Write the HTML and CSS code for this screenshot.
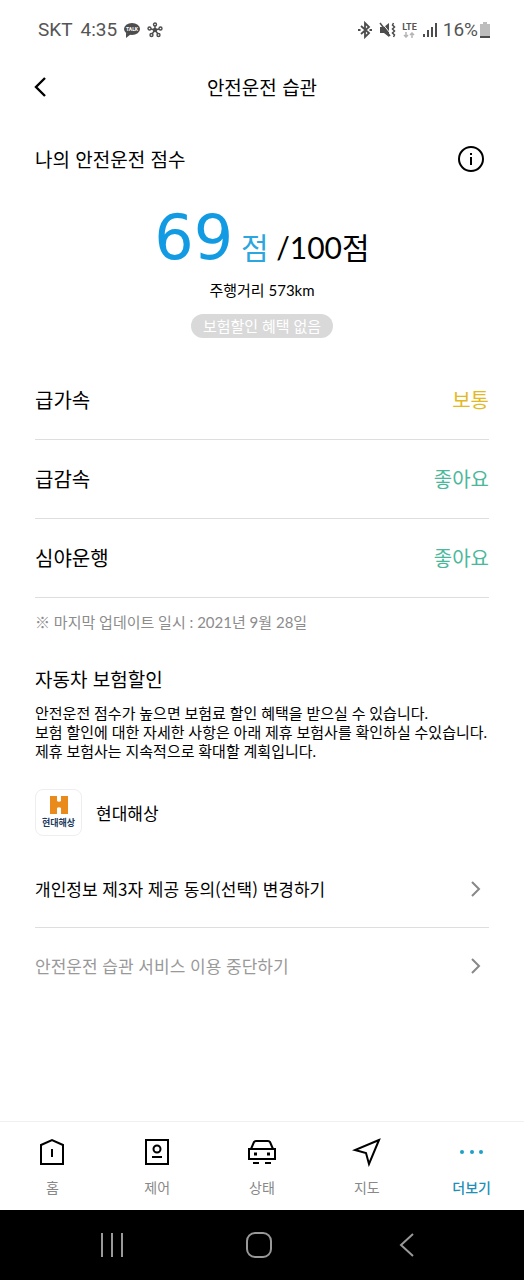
FILE: index.html
```html
<!DOCTYPE html>
<html lang="ko">
<head>
<meta charset="UTF-8">
<meta name="viewport" content="width=device-width, initial-scale=1.0">
<title>안전운전 습관</title>
<link rel="stylesheet" href="styles.css">
</head>
<body>

<div class="status-bar">
  <div class="status-left">
    <span>SKT</span>
    <span>4:35</span>
    <svg class="talk-icon" width="18" height="16" viewBox="0 0 18 16">
      <path d="M3 11l0 5 5-4z"/>
      <ellipse cx="9" cy="7" rx="8" ry="6"/>
      <text x="9" y="9" text-anchor="middle">TALK</text>
    </svg>
    <svg width="16" height="16" viewBox="0 0 16 16" fill="none" stroke="#4d4d4d" stroke-width="1.4">
      <path d="M8 8V4M8 8l4-1M8 8L4 7M8 8l3 4M8 8l-3 4"/>
      <circle cx="8" cy="8" r="1.5"/>
      <circle cx="8" cy="2.5" r="1.5"/>
      <circle cx="13.5" cy="6.5" r="1.5"/>
      <circle cx="2.5" cy="6.5" r="1.5"/>
      <circle cx="4.5" cy="13" r="1.5"/>
      <circle cx="11.5" cy="13" r="1.5"/>
    </svg>
  </div>
  <div class="status-right">
    <svg width="16" height="18" viewBox="0 0 16 18" fill="none" stroke="#4d4d4d" stroke-width="1.8">
      <path d="M4 5l8 7-4 4V2l4 4-8 7"/>
      <path d="M1 9h2.5M12.5 9H15"/>
    </svg>
    <svg width="17" height="16" viewBox="0 0 17 16">
      <path d="M1 5h4l5-4v14l-5-4H1z" fill="#4d4d4d"/>
      <path d="M3 1l8 10" stroke="#fff" stroke-width="1"/>
      <path d="M1 1l10 13" stroke="#4d4d4d" stroke-width="1.5"/>
      <path d="M14.5 1l-1 2 2 2-2 2 2 2-2 2 2 2-1 2" fill="none" stroke="#4d4d4d" stroke-width="1.5"/>
    </svg>
    <span class="lte">LTE
      <svg width="12" height="6" viewBox="0 0 12 6" fill="none" stroke="#b5b5b5" stroke-width="1.5">
        <path d="M3 0v5M1 3l2 2 2-2M9 6V1M7 3l2-2 2 2"/>
      </svg>
    </span>
    <svg width="14" height="16" viewBox="0 0 14 16" fill="#4d4d4d">
      <path d="M0 12h2v3H0zM4 8h2v7H4zM8 5h2v10H8zM12 1h2v14h-2z"/>
    </svg>
    <span class="battery">16%
      <svg width="10" height="16" viewBox="0 0 10 16">
        <path d="M3 0h4v2h3v14H0V2h3z" fill="#bdbdbd"/>
        <path d="M0 14h10v2H0z" fill="#4d4d4d"/>
      </svg>
    </span>
  </div>
</div>

<header class="app-header">
  <button class="back" type="button" aria-label="뒤로">
    <svg width="14" height="22" viewBox="0 0 14 22" fill="none" stroke="#000" stroke-width="2.4">
      <path d="M12 2L3 11l9 9"/>
    </svg>
  </button>
  <h1>안전운전 습관</h1>
</header>

<main>
  <div class="title-row">
    <h2>나의 안전운전 점수</h2>
    <button class="info" type="button" aria-label="안내">
      <svg width="28" height="28" viewBox="0 0 28 28" fill="none" stroke="#000" stroke-width="2">
        <circle cx="14" cy="14" r="12"/>
        <path d="M14 12v8M14 8v2"/>
      </svg>
    </button>
  </div>

  <!-- Score summary -->
  <section class="score">
    <p class="points"><strong>69</strong> <span class="unit">점</span> <span class="total">/100점</span></p>
    <p class="distance">주행거리 573km</p>
    <span class="badge">보험할인 혜택 없음</span>
  </section>

  <dl class="habits">
    <div class="habit"><dt>급가속</dt><dd class="normal">보통</dd></div>
    <div class="habit"><dt>급감속</dt><dd class="good">좋아요</dd></div>
    <div class="habit"><dt>심야운행</dt><dd class="good">좋아요</dd></div>
  </dl>
  <p class="updated">※ 마지막 업데이트 일시 : 2021년 9월 28일</p>

  <!-- Insurance discount -->
  <section class="insurance">
    <h2>자동차 보험할인</h2>
    <p>안전운전 점수가 높으면 보험료 할인 혜택을 받으실 수 있습니다.<br>
    보험 할인에 대한 자세한 사항은 아래 제휴 보험사를 확인하실 수있습니다.<br>
    제휴 보험사는 지속적으로 확대할 계획입니다.</p>
    <a class="insurer" href="#insurer">
      <span class="logo">
        <svg width="20" height="18" viewBox="0 0 20 18" fill="#ea8a1a">
          <path d="M1 0h7v5c1 1 3 1 4 0V0h7v18h-7v-6c-1-1-3-1-4 0v6H1z"/>
        </svg>
        <span>현대해상</span>
      </span>
      현대해상
    </a>
  </section>

  <div class="links">
    <a href="#consent">개인정보 제3자 제공 동의(선택) 변경하기
      <svg width="10" height="16" viewBox="0 0 10 16"><path d="M1 1l7 7-7 7"/></svg>
    </a>
    <a class="stop" href="#stop">안전운전 습관 서비스 이용 중단하기
      <svg width="10" height="16" viewBox="0 0 10 16"><path d="M1 1l7 7-7 7"/></svg>
    </a>
  </div>
</main>

<nav class="tabs">
  <a href="#home">
    <svg width="30" height="30" viewBox="0 0 30 30">
      <path d="M4 8l11-5 11 5v19H4z"/>
      <path d="M15 12v8"/>
    </svg>
    홈
  </a>
  <a href="#control">
    <svg width="30" height="30" viewBox="0 0 30 30">
      <path d="M4 3h22v24H4z"/>
      <circle cx="15" cy="12" r="3.5"/>
      <path d="M10 20h10"/>
    </svg>
    제어
  </a>
  <a href="#status">
    <svg width="30" height="30" viewBox="0 0 30 30">
      <path d="M4 12l3-7q.5-1 2-1h12q1.5 0 2 1l3 7M2 12h26v10H2z"/>
      <path d="M7 17h3M20 17h3" stroke-width="3"/>
      <path d="M6 26h6M18 26h6"/>
    </svg>
    상태
  </a>
  <a href="#map">
    <svg width="30" height="30" viewBox="0 0 30 30">
      <path d="M27 3L3 13l11 3 3 11z"/>
    </svg>
    지도
  </a>
  <a class="active" href="#more">
    <svg width="30" height="30" viewBox="0 0 30 30">
      <circle cx="5" cy="15" r="2"/>
      <circle cx="15" cy="15" r="2"/>
      <circle cx="24" cy="15" r="2"/>
    </svg>
    더보기
  </a>
</nav>

<div class="system-bar">
  <button type="button" aria-label="최근 앱">
    <svg width="28" height="28" viewBox="0 0 28 28"><path d="M4 2v24M14 2v24M24 2v24"/></svg>
  </button>
  <button type="button" aria-label="홈 화면">
    <svg width="28" height="28" viewBox="0 0 28 28"><rect x="2" y="2" width="24" height="24" rx="8"/></svg>
  </button>
  <button type="button" aria-label="이전">
    <svg width="28" height="28" viewBox="0 0 28 28"><path d="M20 3L8 14l12 11"/></svg>
  </button>
</div>

</body>
</html>
```
FILE: styles.css
```css
* {
  box-sizing: border-box;
}
body {
  display: flex;
  flex-direction: column;
  min-height: 100vh;
  margin: 0;
  background-color: #fff;
  color: #000;
  font-family: "Noto Sans CJK KR", sans-serif;
  font-size: 20px;
  line-height: 30px;
}
h1, h2, p, dl, dd {
  margin: 0;
  font-weight: 400;
}
h1, h2 {
  font-size: 19px;
}
a {
  color: inherit;
  text-decoration: none;
}
button {
  display: flex;
  padding: 0;
  border: 0;
  background: none;
}
svg {
  display: block;
  flex: none;
}

/* Phone status bar */
.status-bar {
  display: flex;
  justify-content: space-between;
  align-items: center;
  height: 60px;
  padding: 0 34px 0 38px;
  color: #555;
  font-family: Roboto, sans-serif;
  font-size: 19px;
}
.status-left, .status-right {
  display: flex;
  align-items: center;
  gap: 6px;
}
.status-left span + span {
  margin-left: 2px;
}
.talk-icon {
  fill: #4d4d4d;
}
.talk-icon text {
  fill: #fff;
  font: bold 5px Roboto, sans-serif;
}
.lte {
  display: flex;
  flex-direction: column;
  align-items: center;
  font-size: 9px;
  font-weight: 700;
  line-height: 10px;
}
.battery {
  display: flex;
  align-items: center;
  gap: 2px;
}

/* Header with the back button */
.app-header {
  display: grid;
  grid-template-columns: 40px 1fr 40px;
  align-items: center;
  height: 54px;
  padding: 0 33px;
  text-align: center;
}

main {
  flex: 1;
  padding: 22px 35px 40px;
}
.title-row {
  display: flex;
  justify-content: space-between;
  align-items: center;
  height: 46px;
}
.info {
  margin-right: 4px;
}

.score {
  display: flex;
  flex-direction: column;
  align-items: center;
  padding: 26px 0 23px;
  font-family: Lato, "Noto Sans CJK KR", sans-serif;
}
.points {
  font-size: 30px;
  line-height: 60px;
}
.points strong {
  color: #129be2;
  font-family: "DejaVu Sans", sans-serif;
  font-size: 62px;
  font-weight: 400;
}
.unit {
  color: #2ba6de;
}
.distance {
  font-size: 15px;
  line-height: 26px;
}
.badge {
  margin-top: 11px;
  padding: 0 12px;
  border-radius: 12px;
  background-color: #d9d9d9;
  color: #fff;
  font-size: 15px;
  line-height: 24px;
}

/* Driving habit rows */
.habit {
  display: flex;
  justify-content: space-between;
  align-items: center;
  height: 79px;
  border-bottom: 1px solid #dedede;
}
.normal {
  color: #e3b91f;
}
.good {
  color: #4bb89b;
}
.updated {
  margin-top: 12px;
  color: #8c8c8c;
  font-family: Lato, "Noto Sans CJK KR", sans-serif;
  font-size: 15px;
  line-height: 24px;
}

.insurance h2 {
  margin-top: 30px;
}
.insurance p {
  margin: 10px -10px 0 0;
  font-family: Lato, "Noto Sans CJK KR", sans-serif;
  font-size: 15px;
  line-height: 19px;
}
.insurer {
  display: flex;
  align-items: center;
  gap: 14px;
  margin-top: 28px;
  font-size: 17px;
}
.logo {
  display: flex;
  flex-direction: column;
  align-items: center;
  width: 47px;
  height: 47px;
  padding-top: 6px;
  border: 1px solid #eee;
  border-radius: 8px;
}
.logo span {
  color: #1c3a5e;
  font-size: 9px;
  font-weight: 700;
  line-height: 18px;
}

.links {
  margin-top: 15px;
}
.links a {
  display: flex;
  justify-content: space-between;
  align-items: center;
  height: 76px;
  padding-right: 8px;
  font-size: 17px;
}
.links a + a {
  border-top: 1px solid #dedede;
}
.links svg {
  fill: none;
  stroke: #888;
  stroke-width: 2;
}
.links .stop {
  color: #999;
}

/* Bottom navigation */
.tabs {
  display: grid;
  grid-template-columns: repeat(5, 1fr);
  padding: 15px 0 11px;
  border-top: 1px solid #f0f0f0;
}
.tabs a {
  display: flex;
  flex-direction: column;
  align-items: center;
  gap: 8px;
  color: #888;
  font-size: 14px;
  line-height: 24px;
}
.tabs svg {
  fill: none;
  stroke: #000;
  stroke-width: 2;
}
.tabs .active {
  color: #1f8fb5;
  font-weight: 500;
}
.tabs .active svg {
  fill: #1fa0c8;
  stroke: none;
}

.system-bar {
  display: flex;
  justify-content: space-around;
  align-items: center;
  height: 70px;
  padding: 0 43px 0 38px;
  background-color: #000;
}
.system-bar svg {
  fill: none;
  stroke: #999;
  stroke-width: 2;
}
```
